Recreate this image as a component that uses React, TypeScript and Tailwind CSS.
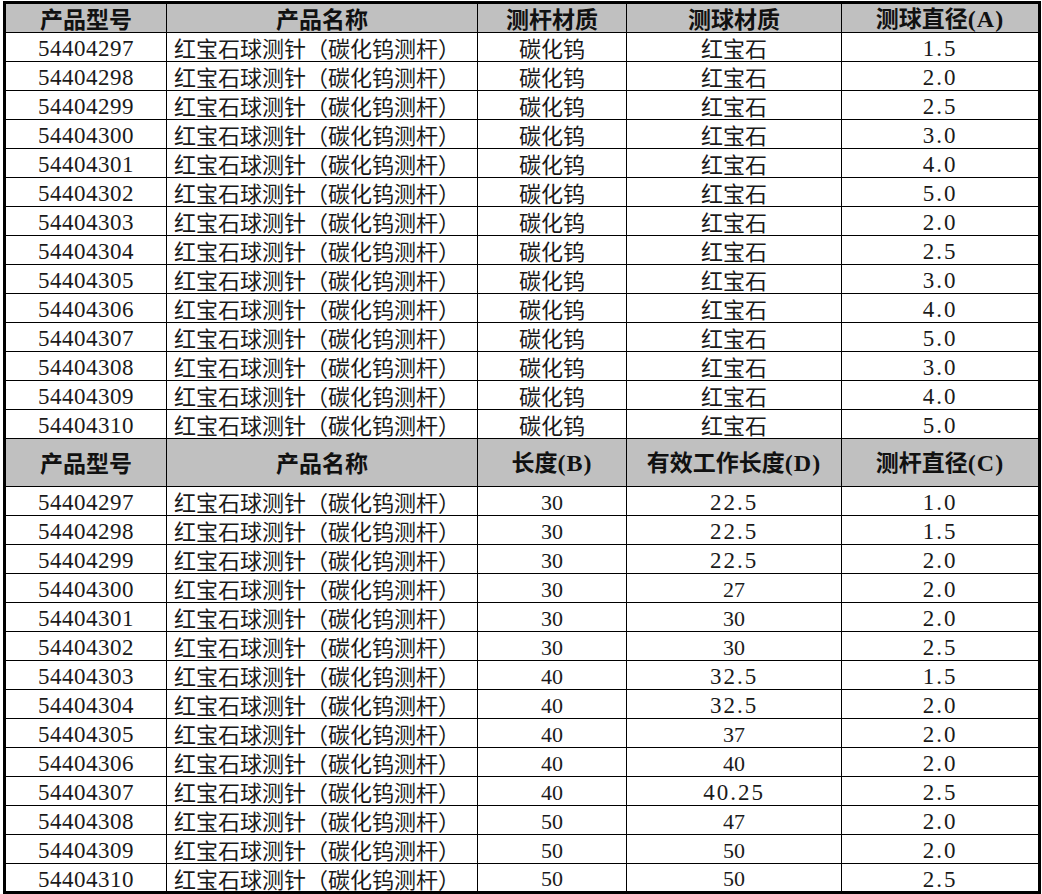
import React from "react";

const ids = [
  "54404297","54404298","54404299","54404300","54404301","54404302","54404303",
  "54404304","54404305","54404306","54404307","54404308","54404309","54404310",
];
const ballDia = ["1.5","2.0","2.5","3.0","4.0","5.0","2.0","2.5","3.0","4.0","5.0","3.0","4.0","5.0"];
const lenB = ["30","30","30","30","30","30","40","40","40","40","40","50","50","50"];
const effD = ["22.5","22.5","22.5","27","30","30","32.5","32.5","37","40","40.25","47","50","50"];
const stemC = ["1.0","1.5","2.0","2.0","2.0","2.5","1.5","2.0","2.0","2.0","2.5","2.0","2.0","2.5"];

const NAME = "红宝石球测针（碳化钨测杆）";
const cjk = "font-['Noto_Sans_CJK_SC',sans-serif]";
const num =
  "font-['Liberation_Serif','Noto_Sans_CJK_SC',serif] text-[23px] tracking-[0.5px] pt-[3px]";
const dec =
  "font-['Liberation_Serif','Noto_Sans_CJK_SC',serif] text-[23px] tracking-[2px] pt-[3px]";
const serif = "font-['Liberation_Serif','Noto_Sans_CJK_SC',serif] text-[22px] pt-[3px]";

function numFont(v: string) {
  return v.includes(".") ? dec : serif;
}

const td = "border border-black p-0 h-[29px] leading-none text-[#1a1a1a] align-middle";
const th =
  "border border-black p-0 bg-[#c0c0c0] font-bold text-[#111] text-[23px] leading-none align-middle " + cjk;

function HeadText({ t }: { t: string }) {
  const m = t.match(/^(.*?)(\([A-Z]\))$/);
  if (!m) return <>{t}</>;
  return (
    <>
      {m[1]}
      <span className="font-['Liberation_Serif',serif] text-[24px] font-bold tracking-[1px]">{m[2]}</span>
    </>
  );
}

function Header({ cols, tall }: { cols: string[]; tall?: boolean }) {
  return (
    <tr className={tall ? "h-[48px]" : "h-[30px]"}>
      {cols.map((c, i) => (
        <th key={i} className={th}>
          <HeadText t={c} />
        </th>
      ))}
    </tr>
  );
}

export default function App() {
  return (
    <div className="bg-white w-[1042px] h-[894px] pl-[3px] pt-[1px]">
      <table className="border-collapse border-[3px] border-black table-fixed w-[1035px]">
        <colgroup>
          <col className="w-[162px]" />
          <col className="w-[311px]" />
          <col className="w-[149px]" />
          <col className="w-[215px]" />
          <col className="w-[198px]" />
        </colgroup>
        <tbody>
          <Header cols={["产品型号", "产品名称", "测杆材质", "测球材质", "测球直径(A)"]} />
          {ids.map((id, i) => (
            <tr key={"a" + i}>
              <td className={td + " text-center " + num}>{id}</td>
              <td className={td + " text-left pl-[7px] text-[22px] " + cjk}>{NAME}</td>
              <td className={td + " text-center text-[22px] " + cjk}>碳化钨</td>
              <td className={td + " text-center text-[22px] " + cjk}>红宝石</td>
              <td className={td + " text-center " + dec}>{ballDia[i]}</td>
            </tr>
          ))}
          <Header tall cols={["产品型号", "产品名称", "长度(B)", "有效工作长度(D)", "测杆直径(C)"]} />
          {ids.map((id, i) => (
            <tr key={"b" + i}>
              <td className={td + " text-center " + num}>{id}</td>
              <td className={td + " text-left pl-[7px] text-[22px] " + cjk}>{NAME}</td>
              <td className={td + " text-center " + numFont(lenB[i])}>{lenB[i]}</td>
              <td className={td + " text-center " + numFont(effD[i])}>{effD[i]}</td>
              <td className={td + " text-center " + dec}>{stemC[i]}</td>
            </tr>
          ))}
        </tbody>
      </table>
    </div>
  );
}
